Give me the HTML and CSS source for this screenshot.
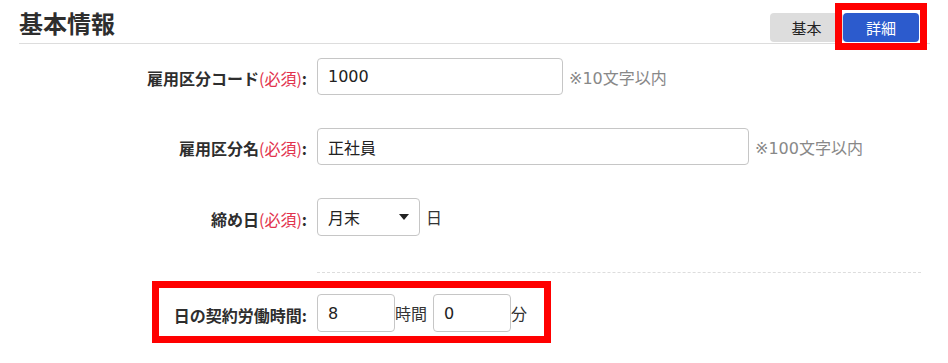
FILE: index.html
```html
<!DOCTYPE html>
<html lang="ja">
<head>
<meta charset="utf-8">
<title>基本情報</title>
<link rel="stylesheet" href="styles.css">
</head>
<body>
<div class="page">
  <div class="header">
    <h2 class="title">基本情報</h2>
    <div class="tabs">
      <button class="tab">基本</button>
      <button class="tab tab-active">詳細</button>
    </div>
  </div>

  <div class="form">
    <div class="row">
      <label class="label">雇用区分コード<span class="req">(必須)</span>:</label>
      <div class="field">
        <input class="input input-code" type="text" value="1000">
        <span class="hint">※10文字以内</span>
      </div>
    </div>

    <div class="row">
      <label class="label">雇用区分名<span class="req">(必須)</span>:</label>
      <div class="field">
        <input class="input input-name" type="text" value="正社員">
        <span class="hint">※100文字以内</span>
      </div>
    </div>

    <div class="row row-select">
      <label class="label">締め日<span class="req">(必須)</span>:</label>
      <div class="field">
        <div class="select">
          <span>月末</span>
          <svg class="caret" width="10" height="6" viewBox="0 0 10 6"><path d="M0 0 H10 L5 6 Z" fill="#222"/></svg>
        </div>
        <span class="unit unit-day">日</span>
      </div>
    </div>

    <div class="separator"></div>

    <div class="row row-hours">
      <label class="label">日の契約労働時間:</label>
      <div class="field">
        <input class="input input-small" type="text" value="8">
        <span class="unit">時間</span>
        <input class="input input-small input-min" type="text" value="0">
        <span class="unit">分</span>
      </div>
    </div>
  </div>
</div>
</body>
</html>
```

FILE: styles.css
```css
*, *::before, *::after {
  box-sizing: border-box;
}

html, body {
  min-height: 363px;
}

body {
  margin: 0;
  background: #ffffff;
  font-family: "Noto Sans CJK JP", "Noto Sans", sans-serif;
  color: #333333;
}

.page {
  width: 948px;
  min-height: 363px;
}

.header {
  margin: 0 18px 0 19px;
  height: 44px;
  border-bottom: 1px solid #dddddd;
  display: flex;
  justify-content: space-between;
  align-items: flex-end;
  padding-bottom: 1px;
}

.title {
  margin: 0;
  align-self: flex-start;
  margin-top: 7px;
  font-size: 24px;
  line-height: 32px;
  font-weight: bold;
  color: #2e2e2e;
}

.tabs {
  display: flex;
  margin-right: 11px;
}

.tab {
  font-family: inherit;
  font-size: 15px;
  line-height: 29px;
  height: 29px;
  padding: 0;
  border: none;
  border-radius: 4px;
  background: #dddddd;
  color: #222222;
  width: 73px;
}

.tab-active {
  position: relative;
  width: 76px;
  background: #2c5bcd;
  color: #ffffff;
}

.tab-active::after {
  content: "";
  position: absolute;
  left: -8px;
  right: -8px;
  top: -10px;
  bottom: -8px;
  border: 7px solid #ff0000;
  pointer-events: none;
}

.form {
  padding-left: 19px;
  padding-top: 14px;
}

.row {
  display: grid;
  grid-template-columns: 288px 1fr;
  column-gap: 10px;
  align-items: center;
  height: 37px;
  margin-bottom: 33px;
}

.row-select {
  height: 38px;
  margin-top: 1px;
  margin-bottom: 0;
}

.label {
  text-align: right;
  font-size: 16px;
  font-weight: bold;
  color: #2e2e2e;
  white-space: nowrap;
  line-height: 20px;
  padding-top: 3px;
}

.req {
  color: #e2334d;
  font-weight: normal;
}

.field {
  display: flex;
  align-items: center;
  height: 100%;
}

.input {
  font-family: "DejaVu Sans", "Noto Sans CJK JP", sans-serif;
  font-size: 16px;
  color: #222222;
  height: 37px;
  padding: 0 10px;
  border: 1px solid #c6c6c6;
  border-radius: 4px;
  background: #ffffff;
}

.input-code {
  width: 246px;
}

.input-name {
  width: 432px;
}

.input-small {
  width: 78px;
  height: 38px;
}

.input-min {
  margin-left: 6px;
}

.hint {
  margin-left: 6px;
  font-family: "DejaVu Sans", "Noto Sans CJK JP", sans-serif;
  font-size: 16px;
  color: #888888;
}

.select {
  width: 103px;
  height: 38px;
  border: 1px solid #c6c6c6;
  border-radius: 4px;
  display: flex;
  align-items: center;
  justify-content: space-between;
  padding: 0 10px 0 10px;
  font-size: 16px;
  color: #222222;
}

.caret {
  display: block;
}

.unit {
  font-size: 16px;
  color: #333333;
}

.unit-day {
  margin-left: 6px;
}

.separator {
  margin: 36px 27px 0 298px;
  border-top: 1px dashed #dddddd;
}

.row-hours {
  position: relative;
  margin-top: 21px;
  height: 38px;
  margin-bottom: 0;
}

.row-hours::after {
  content: "";
  position: absolute;
  left: 133px;
  top: -13px;
  width: 399px;
  height: 62px;
  border: 7px solid #ff0000;
  pointer-events: none;
}
```
